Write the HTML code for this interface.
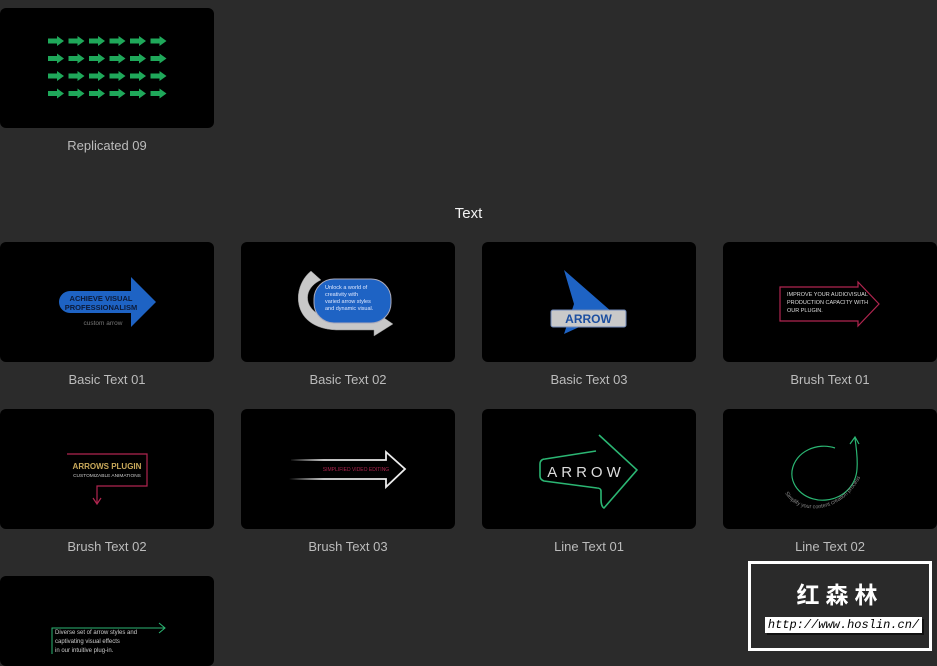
<!DOCTYPE html>
<html><head><meta charset="utf-8"><style>
html,body{margin:0;padding:0}
body{width:937px;height:654px;background:#2b2b2b;position:relative;overflow:hidden;font-family:"Liberation Sans",sans-serif}
.card{position:absolute;width:214px;height:120px;background:#000;border-radius:6px;overflow:hidden}
.card svg{position:absolute;left:0;top:0}
.lbl{position:absolute;width:214px;text-align:center;color:#bcbcbc;font-size:13px}
.hdr{position:absolute;left:0;width:937px;top:205px;text-align:center;color:#f2f2f2;font-size:15px}
</style></head><body>

<div class="card" style="left:0;top:8px"><svg width="214" height="120">
<defs><path id="ga" d="M0 -2.5 H9 V-5 L16 0 L9 5 V2.5 H0 Z" fill="#1fa85a"/></defs>
<g>
<use href="#ga" x="48" y="33"/><use href="#ga" x="68.5" y="33"/><use href="#ga" x="89" y="33"/><use href="#ga" x="109.5" y="33"/><use href="#ga" x="130" y="33"/><use href="#ga" x="150.5" y="33"/>
<use href="#ga" x="48" y="50.5"/><use href="#ga" x="68.5" y="50.5"/><use href="#ga" x="89" y="50.5"/><use href="#ga" x="109.5" y="50.5"/><use href="#ga" x="130" y="50.5"/><use href="#ga" x="150.5" y="50.5"/>
<use href="#ga" x="48" y="68"/><use href="#ga" x="68.5" y="68"/><use href="#ga" x="89" y="68"/><use href="#ga" x="109.5" y="68"/><use href="#ga" x="130" y="68"/><use href="#ga" x="150.5" y="68"/>
<use href="#ga" x="48" y="85.5"/><use href="#ga" x="68.5" y="85.5"/><use href="#ga" x="89" y="85.5"/><use href="#ga" x="109.5" y="85.5"/><use href="#ga" x="130" y="85.5"/><use href="#ga" x="150.5" y="85.5"/>
</g></svg></div>
<div class="lbl" style="left:0;top:138px">Replicated 09</div>

<div class="hdr">Text</div>

<div class="card" style="left:0;top:242px"><svg width="214" height="120">
<path d="M70 49 H131 V35 L156 60 L131 85 V71 H70 A11 11 0 0 1 70 49 Z" fill="#1e63c4"/>
<text x="101" y="59" fill="#0c1b3a" font-size="7.5" font-weight="bold" text-anchor="middle">ACHIEVE VISUAL</text>
<text x="101" y="68" fill="#0c1b3a" font-size="7.5" font-weight="bold" text-anchor="middle">PROFESSIONALISM</text>
<text x="103" y="83" fill="#777" font-size="6.5" text-anchor="middle">custom arrow</text>
</svg></div>
<div class="lbl" style="left:0;top:372px">Basic Text 01</div>

<div class="card" style="left:241px;top:242px"><svg width="214" height="120">
<path d="M70 29 L80 38 C58 48 62 76 100 78 H133 V69 L152 82 L133 94 V88 H95 C50 86 50 45 70 29 Z" fill="#c8c8c8" stroke="#888" stroke-width="0.5"/>
<rect x="73" y="37" width="77" height="44" rx="20" fill="#1e63c4" stroke="#aab" stroke-width="1"/>
<text fill="#dfe8ff" font-size="5.5" x="84" y="47">Unlock a world of</text>
<text fill="#dfe8ff" font-size="5.5" x="84" y="54">creativity with</text>
<text fill="#dfe8ff" font-size="5.5" x="84" y="61">varied arrow styles</text>
<text fill="#dfe8ff" font-size="5.5" x="84" y="68">and dynamic visual.</text>
</svg></div>
<div class="lbl" style="left:241px;top:372px">Basic Text 02</div>

<div class="card" style="left:482px;top:242px"><svg width="214" height="120">
<path d="M82 28 L130 70 L82 92 L92 62 Z" fill="#1e63c4"/>
<rect x="69" y="68" width="75" height="17" rx="2" fill="#c9c9c9" stroke="#6f88b8" stroke-width="1"/>
<text x="106.5" y="81" fill="#1d4fa0" font-size="12" font-weight="bold" text-anchor="middle">ARROW</text>
</svg></div>
<div class="lbl" style="left:482px;top:372px">Basic Text 03</div>

<div class="card" style="left:723px;top:242px"><svg width="214" height="120">
<path d="M57 45 H135 V40 L156 62 L135 84 V79 H57 Z" fill="none" stroke="#b0254f" stroke-width="1.2"/>
<text fill="#ddd" font-size="5.5" x="64" y="54">IMPROVE YOUR AUDIOVISUAL</text>
<text fill="#ddd" font-size="5.5" x="64" y="62">PRODUCTION CAPACITY WITH</text>
<text fill="#ddd" font-size="5.5" x="64" y="70">OUR PLUGIN.</text>
</svg></div>
<div class="lbl" style="left:723px;top:372px">Brush Text 01</div>

<div class="card" style="left:0;top:409px"><svg width="214" height="120">
<path d="M67 45 H147 V77 H97 V94 M93 89 L97 95 L101 89" fill="none" stroke="#b0254f" stroke-width="1.2"/>
<text x="107" y="60" fill="#c9a95a" font-size="8" font-weight="bold" text-anchor="middle">ARROWS PLUGIN</text>
<text x="107" y="68" fill="#ccc" font-size="4.8" text-anchor="middle">CUSTOMIZABLE ANIMATIONS</text>
</svg></div>
<div class="lbl" style="left:0;top:539px">Brush Text 02</div>

<div class="card" style="left:241px;top:409px"><svg width="214" height="120">
<defs><linearGradient id="bg3" x1="0" x2="1"><stop offset="0" stop-color="#fff" stop-opacity="0"/><stop offset="0.3" stop-color="#ddd"/><stop offset="1" stop-color="#eee"/></linearGradient></defs>
<path d="M50 51 H145 V43 L164 60 L145 78 V70 H48" fill="none" stroke="url(#bg3)" stroke-width="1.8"/>
<text x="115" y="62" fill="#b0254f" font-size="5" text-anchor="middle">SIMPLIFIED VIDEO EDITING</text>
</svg></div>
<div class="lbl" style="left:241px;top:539px">Brush Text 03</div>

<div class="card" style="left:482px;top:409px"><svg width="214" height="120">
<path d="M117 26 L155 61 L122 99 C120 98 119 95 119 90 V82 C119 80 117 79 115 79 L62 72 C59 71 58 69 58 67 V55 C58 52 60 50 63 50 L114 42" fill="none" stroke="#2bb673" stroke-width="1.6" stroke-linejoin="round"/>
<text x="104" y="68" fill="#ddd" font-size="15" letter-spacing="4" text-anchor="middle">ARROW</text>
</svg></div>
<div class="lbl" style="left:482px;top:539px">Line Text 01</div>

<div class="card" style="left:723px;top:409px"><svg width="214" height="120">
<path d="M112 39 C 95 33, 72 42, 69 62 C 67 80, 85 93, 103 91 C 122 89, 133 75, 134 60 C 135 48, 133 38, 132 29 M127 35 L132 28 L136 35" fill="none" stroke="#2bb673" stroke-width="1.2"/>
<path id="arcp" d="M62 84 C 75 108, 125 108, 143 55" fill="none"/>
<text fill="#8a8a8a" font-size="5.5"><textPath href="#arcp">Simplify your content creation process</textPath></text>
</svg></div>
<div class="lbl" style="left:723px;top:539px">Line Text 02</div>

<div class="card" style="left:0;top:576px;height:90px"><svg width="214" height="90">
<path d="M52 78 V52 H165 M159 47 L165 52 L159 57" fill="none" stroke="#2bb673" stroke-width="1"/>
<text fill="#ccc" font-size="6" x="55" y="58">Diverse set of arrow styles and</text>
<text fill="#ccc" font-size="6" x="55" y="67">captivating visual effects</text>
<text fill="#ccc" font-size="6" x="55" y="76">in our intuitive plug-in.</text>
</svg></div>

<div style="position:absolute;left:748px;top:561px;width:178px;height:84px;border:3px solid #fff;background:#2a2a2a"></div>
<div style="position:absolute;left:748px;top:576px;width:184px;text-align:center;color:#fff;font-family:'WenQuanYi Zen Hei','Noto Sans CJK SC',sans-serif;font-size:23px;letter-spacing:6px;font-weight:bold">红森林</div>
<div style="position:absolute;left:765px;top:617px;width:157px;height:16px;background:#fff;color:#000;font-family:'Liberation Mono',monospace;font-style:italic;font-size:12px;line-height:16px;text-align:center;box-shadow:2px 2px 0 #111">http://www.hoslin.cn/</div>
</body></html>
